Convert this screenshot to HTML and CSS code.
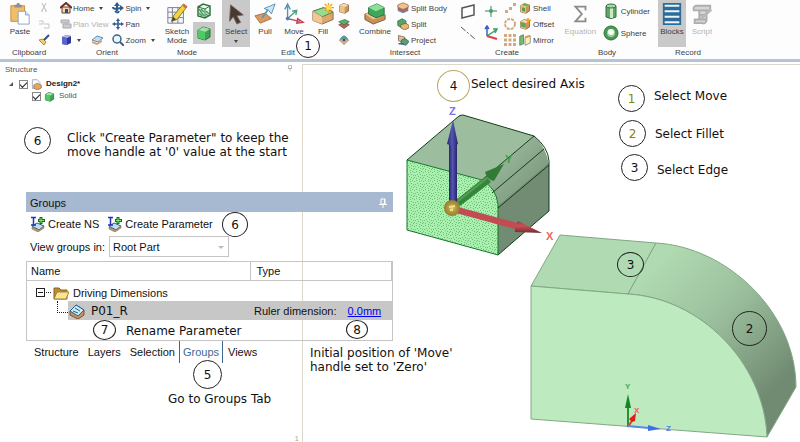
FILE: index.html
```html
<!DOCTYPE html>
<html lang="en">
<head>
<meta charset="utf-8">
<title>Design2 - Create Parameter</title>
<link rel="stylesheet" href="styles.css">
</head>
<body>
<svg class="defs" width="0" height="0" aria-hidden="true">
  <symbol id="cube" viewBox="0 0 16 16"><path d="M2 5l5-3 7 2v8l-5 3-7-2z" fill="#3fa052" stroke="#23713a"/><path d="M2 5l7 2 5-3-7-2z" fill="#9fe0a5"/><path d="M2 5l7 2v8l-7-2z" fill="#4fc868"/></symbol>
  <symbol id="tan" viewBox="0 0 16 16"><path d="M2 5l5-3 7 2v8l-5 3-7-2z" fill="#c99558" stroke="#7d5a35"/><path d="M2 5l7 2 5-3-7-2z" fill="#f4d7ad"/><path d="M2 5l7 2v8l-7-2z" fill="#eec28c"/></symbol>
  <symbol id="group-add" viewBox="0 0 16 16"><path d="M2 10l5-3 7 3-5 4z" fill="#b9e1f3" stroke="#39607d"/><path d="M2 11v2l6 3 6-4v-2l-5 4z" fill="#bb9a76" stroke="#755a43" stroke-width=".5"/><path d="M1 1.500h5M3.500 2v7M1 9h5" stroke="#2330b8" stroke-width="1.500"/><path d="M11 1v7M8 4.500h7" stroke="#176a1b" stroke-width="3"/><path d="M11 2v5M9 4.500h5" stroke="#7bed6b" stroke-width="1"/></symbol>
</svg>

<header class="ribbon">
  <section class="group clipboard">
    <div class="tools">
      <button class="big"><svg viewBox="0 0 24 24"><path d="M2 3h15v17H2z" fill="#f0bd68" stroke="#c48b3b"/><path d="M6 5V2h2l1-2h2l1 2h2v3z" fill="#8f8f94"/><path d="M10 9h8l4 4v10H10z" fill="#fff" stroke="#8aa0bd"/><path d="M18 9v4h4" fill="#dce8f4" stroke="#8aa0bd"/></svg>Paste</button>
      <div class="stack">
        <button aria-label="Cut"><svg viewBox="0 0 12 12"><path d="M4 1l4 8M8 1L4 9M3 9h2M7 9h2" stroke="#bbb" fill="none"/></svg></button>
        <button aria-label="Copy"><svg viewBox="0 0 12 12"><path d="M1 3h4v3H1M6 6h5v4H6" stroke="#c5c5c5" fill="none"/></svg></button>
        <button aria-label="Format painter"><svg viewBox="0 0 12 12"><path d="M1 6l4-1 3 3-2 3z" fill="#efd46e" stroke="#b58b32"/><path d="M6 6l5-5" stroke="#344c82" stroke-width="2"/></svg></button>
      </div>
    </div>
    <h2>Clipboard</h2>
  </section>

  <section class="group orient">
    <div class="tools">
      <div class="stack">
        <button><svg viewBox="0 0 12 12"><path d="M2 5h8v6H2z" fill="#f2d7a5" stroke="#6b3d30"/><path d="M0 6l6-5 6 5" fill="none" stroke="#702a2a" stroke-width="2"/><path d="M5 7h3v4H5z" fill="#38458c"/></svg>Home <i class="caret"></i></button>
        <button class="off"><svg viewBox="0 0 12 12"><path d="M1 2h8v3H1zM3 6h8v4H3z" fill="#ccc" stroke="#aaa"/></svg>Plan View</button>
        <div class="pair">
          <button><svg viewBox="0 0 12 12"><path d="M2 3l4-2 5 1v7l-4 2-5-1z" fill="#313896"/><path d="M2 3l5 1 4-2-5-1z" fill="#b4bbee"/><path d="M2 3l5 1v7l-5-1z" fill="#5a66cf"/></svg><i class="caret"></i></button>
          <button aria-label="View"><svg viewBox="0 0 12 12"><path d="M1 6l5-4 6 2-5 4z" fill="#bfe0f2" stroke="#6a8baa"/><path d="M1 7v2l5 2 5-3V6L6 9z" fill="#d3a171"/></svg></button>
        </div>
      </div>
      <div class="stack">
        <button><svg viewBox="0 0 12 12"><path d="M5 1v8" stroke="#315d8b" stroke-width="2"/><path d="M2 4l3-4 3 4zM8 3l4 3-4 3z" fill="#315d8b"/><path d="M1 5q0 3 8 1M3 9q3 3 4 0" fill="none" stroke="#315d8b" stroke-width="2"/></svg>Spin <i class="caret"></i></button>
        <button><svg viewBox="0 0 12 12"><path d="M6 2v8M2 6h8" stroke="#315d8b" stroke-width="1.500"/><path d="M4 3l2-3 2 3zM4 9l2 3 2-3zM3 4L0 6l3 2zM9 4l3 2-3 2z" fill="#315d8b"/></svg>Pan</button>
        <button><svg viewBox="0 0 12 12"><circle cx="5" cy="5" r="4" fill="#eaf6fb" stroke="#376490" stroke-width="1.500"/><path d="M8 8l4 4" stroke="#376490" stroke-width="2"/></svg>Zoom <i class="caret"></i></button>
      </div>
    </div>
    <h2>Orient</h2>
  </section>

  <section class="group mode">
    <div class="tools">
      <button class="big"><svg viewBox="0 0 24 24"><path d="M2 5h17v17H2zM2 10h17M2 16h17M7 5v17M13 5v17" fill="#f7f7fb" stroke="#77778b"/><path d="M6 20l2-6L19 1l4 3-11 14z" fill="#f1d33e" stroke="#82702a"/><path d="M18 3l2-2 3 3-2 2z" fill="#d6655e"/><path d="M6 20l2-5 3 3z" fill="#444"/></svg>Sketch<br>Mode</button>
      <div class="views">
        <button aria-label="Section mode"><svg viewBox="0 0 16 16"><path d="M2 4l5-3 7 2v9l-5 3-7-2z" fill="#e9f6e8" stroke="#2b7440" stroke-width="1.500"/><path d="M2 4l7 2 5-3M9 6v9" fill="none" stroke="#2b7440"/><path d="M3 6l5 7M3 10l3 3M5 6l3 3M10 8l3 3M10 11l2 2" stroke="#4c9a60" stroke-width="1.500"/></svg></button>
        <button class="active" aria-label="3D mode"><svg viewBox="0 0 16 16"><use href="#cube"/></svg></button>
      </div>
    </div>
    <h2>Mode</h2>
  </section>

  <section class="group edit">
    <div class="tools">
      <button class="big active"><svg viewBox="0 0 24 24"><path d="M6 2l14 11-7 1 4 7-4 2-4-8-4 5z" fill="#493832" stroke="#78665e"/></svg>Select<i class="caret"></i></button>
      <button class="big"><svg viewBox="0 0 24 24"><path d="M1 14l11-3 7 6-12 5z" fill="#d99a62" stroke="#a16e45"/><path d="M9 16l8-11" stroke="#5298bd" stroke-width="2"/><path d="M11 6L23 1l-4 11-3-4z" fill="#c6e7f5" stroke="#5790b4"/></svg>Pull</button>
      <button class="big"><svg viewBox="0 0 24 24"><path d="M5 17V3M2 7l3-6 3 6" fill="none" stroke="#5a93b4" stroke-width="1.500"/><path d="M5 17l9-8M10 9l5-1-1 5" fill="none" stroke="#4aa080" stroke-width="1.500"/><path d="M5 17l13 3M16 17l6 4-7 1z" fill="#f3b9bd" stroke="#bc4653" stroke-width="1.500"/><circle cx="5" cy="17" r="2" fill="#5576bd"/></svg>Move</button>
      <button class="big"><svg viewBox="0 0 24 24"><path d="M1 9l12-4 10 5v8l-12 5-10-4z" fill="#dda76c" stroke="#886345"/><path d="M1 9l12-4 10 5-12 5z" fill="#98db91" stroke="#44864c"/><path d="M1 9l10 6v8l-10-4z" fill="#f2c593"/><path d="M18 0v11M13 5h11M14 1l8 8M22 1l-8 8" stroke="#f49b20" stroke-width="1.500"/><circle cx="18" cy="5" r="3" fill="#ffdc4b"/></svg>Fill</button>
      <div class="stack">
        <button aria-label="Replace"><svg viewBox="0 0 16 16"><use href="#tan"/></svg></button>
        <button aria-label="Tweak"><svg viewBox="0 0 16 16"><path d="M1 9l8-4 6 4-7 5z" fill="#bd645a" stroke="#834a45"/><path d="M1 5l8-3 6 3-7 4z" fill="#58b269" stroke="#32794a"/></svg></button>
        <button aria-label="Pattern"><svg viewBox="0 0 16 16"><path d="M2 8l6-3 6 3-6 6z" fill="#e3bd8f" stroke="#876442"/><path d="M3 7q5-9 10 0" fill="#64a49c" stroke="#376e75"/><circle cx="8" cy="8" r="2" fill="#354fa0"/></svg></button>
      </div>
    </div>
    <h2>Edit</h2>
  </section>

  <section class="group intersect">
    <div class="tools">
      <button class="big"><svg viewBox="0 0 24 24"><path d="M1 12l13-4 9 5v5l-13 5-9-5z" fill="#c89159" stroke="#78583c"/><path d="M1 12l13-4 9 5-13 5z" fill="#eec591"/><path d="M5 5l9-4 8 4v8l-9 3-8-4z" fill="#3fa75d" stroke="#236f3a"/><path d="M5 5l9-4 8 4-9 4z" fill="#8ce199"/></svg>Combine</button>
      <div class="stack">
        <button><svg viewBox="0 0 16 16"><path d="M1 9v3l7 3 7-3V9z" fill="#628dc4"/><path d="M1 6v4l7 3 7-3V6z" fill="#c05d50"/><path d="M1 4l7-3 7 3v3l-7 3-7-3z" fill="#ecc291" stroke="#956b49"/></svg>Split Body</button>
        <button><svg viewBox="0 0 16 16"><path d="M1 4l6-3 5 3v7l-6 2-5-3z" fill="#53a568" stroke="#32704a"/><path d="M5 9l7-2 4 3v3l-6 3-5-3z" fill="#e9b773" stroke="#78583c"/></svg>Split</button>
        <button><svg viewBox="0 0 16 16"><path d="M2 2l8 2v8L2 9z" fill="#e3c094" stroke="#7b624c"/><path d="M6 8l5-2 5 4-4 5-7-2z" fill="#55a26b" stroke="#2f5971"/><path d="M2 13h7" stroke="#4064a7" stroke-width="2"/></svg>Project</button>
      </div>
    </div>
    <h2>Intersect</h2>
  </section>

  <section class="group create">
    <div class="tools">
      <div class="views">
        <button aria-label="Plane"><svg viewBox="0 0 16 16"><path d="M2 5l12-3v10L2 15z" fill="#fff" stroke="#555" stroke-width="1.500"/></svg></button>
        <button aria-label="Axis"><svg viewBox="0 0 16 16"><path d="M1 2l14 12" stroke="#555" stroke-dasharray="6 2 2 2"/></svg></button>
      </div>
      <div class="views">
        <button aria-label="Point"><svg viewBox="0 0 16 16"><path d="M8 3v11M2 8h12" stroke="#3d8058"/><circle cx="8" cy="8" r="2" fill="#38a45f"/></svg></button>
        <button aria-label="Origin"><svg viewBox="0 0 16 16"><path d="M4 11V2M2 4l2-3 2 3" fill="none" stroke="#3b5fc9" stroke-width="1.500"/><path d="M4 11l9-6M10 4l4 0-2 4" fill="none" stroke="#31a263" stroke-width="1.500"/><path d="M4 11l10 3" stroke="#df3d44" stroke-width="2"/></svg></button>
      </div>
      <div class="stack">
        <button aria-label="Linear pattern"><svg viewBox="0 0 12 12"><path d="M1 8h3v3H1zM5 5h3v3H5zM9 1h3v3H9z" fill="#d1aa80"/></svg></button>
        <button aria-label="Circular pattern"><svg viewBox="0 0 12 12"><circle cx="6" cy="6" r="5" fill="none" stroke="#d1aa80" stroke-width="2" stroke-dasharray="3 1"/></svg></button>
        <button aria-label="Fill pattern"><svg viewBox="0 0 12 12"><path d="M0 0h3v3H0zM4.500 0h3v3h-3zM9 0h3v3H9zM0 4.500h3v3H0zM4.500 4.500h3v3h-3zM9 4.500h3v3H9zM0 9h3v3H0zM4.500 9h3v3h-3zM9 9h3v3H9z" fill="#d1aa80"/></svg></button>
      </div>
      <div class="stack">
        <button><svg viewBox="0 0 16 16"><use href="#tan"/><path d="M3 4l7 2 4-2-6-2z" fill="#6ab33d"/><path d="M4 7l4 1v5l-4-1z" fill="#5c9e42"/></svg>Shell</button>
        <button><svg viewBox="0 0 16 16"><use href="#tan"/><path d="M2 5l7 2v6l-6-1z" fill="#64a35b"/><path d="M12 0v7M9 3h7" stroke="#f49b20" stroke-width="2"/></svg>Offset</button>
        <button><svg viewBox="0 0 16 16"><path d="M1 3l5-2v12l-5 2z" fill="#7bbb77" stroke="#467c4c"/><path d="M8 5l7-2v9l-7 3z" fill="#fff0b9" stroke="#777"/><path d="M8 4l7-2" stroke="#f19a22" stroke-width="2"/></svg>Mirror</button>
      </div>
    </div>
    <h2>Create</h2>
  </section>

  <section class="group body">
    <div class="tools">
      <button class="big off"><svg viewBox="0 0 24 24"><path d="M18 8V4H7l7 8-7 8h11v-4" fill="none" stroke="#8b8b8b" stroke-width="2"/></svg>Equation</button>
      <div class="views">
        <button><svg viewBox="0 0 16 16"><path d="M3 3v11q5 3 10 0V3z" fill="#5ea765" stroke="#356f40"/><path d="M7 5h3v10H7z" fill="#cceacb"/><ellipse cx="8" cy="3" rx="5" ry="2" fill="#a6d8a9" stroke="#356f40"/></svg>Cylinder</button>
        <button><svg viewBox="0 0 16 16"><circle cx="8" cy="8" r="7" fill="#4b9954" stroke="#327040"/><circle cx="8" cy="8" r="4" fill="#9bcf9a"/><circle cx="8" cy="7" r="3" fill="#f4fff1"/></svg>Sphere</button>
      </div>
    </div>
    <h2>Body</h2>
  </section>

  <section class="group record">
    <div class="tools">
      <button class="big active"><svg viewBox="0 0 24 24"><path d="M2 0h20v24H2z" fill="#2d6c98"/><path d="M4 3h16M4 9h16M4 15h16M4 21h16" stroke="#edf5fa" stroke-width="2"/></svg>Blocks</button>
      <button class="big off"><svg viewBox="0 0 24 24"><path d="M5 3h16v5h-4v11q-1 4-5 3H4v-4h5V8H3q-1-4 2-5zM9 8h8M10 13h6M9 18h8" fill="#d5d5d5" stroke="#adadad" stroke-width="2"/><path d="M11 17L22 7" stroke="#b8b8b8" stroke-width="3"/></svg>Script</button>
    </div>
    <h2>Record</h2>
  </section>
</header>

<main class="workspace">
  <aside class="structure">
    <div class="structure-head">Structure
      <svg viewBox="0 0 8 10"><path d="M2 1h4v4H2zM1 5h6M4 5v4" fill="none" stroke="#aaa"/></svg>
    </div>
    <div class="tree">
      <label class="node"><i class="twisty"></i><input type="checkbox" checked><svg viewBox="0 0 16 16"><path d="M2 1h7l4 4v9H2z" fill="#f9f9fc" stroke="#8b91aa"/><path d="M4 9l5-3 6 3v4l-6 3-5-3z" fill="#e1a76a" stroke="#926541"/></svg><b>Design2*</b></label>
      <label class="node child"><input type="checkbox" checked><svg viewBox="0 0 16 16"><use href="#cube"/></svg><span>Solid</span></label>
    </div>
    <span class="ruler">1</span>
  </aside>
  <div class="canvas"></div>
</main>

<svg class="model small-model" viewBox="400 105 160 155" role="img" aria-label="Block with move handle">
  <defs>
    <pattern id="stipple" width="9" height="9" patternUnits="userSpaceOnUse"><path fill="#7bb781" shape-rendering="crispEdges" d="M0 1h1v1h-1zM2 0h1v1h-1zM5 1h1v1h-1zM7 0h1v1h-1zM3 3h1v1h-1zM1 4h1v1h-1zM6 3h1v1h-1zM8 4h1v1h-1zM4 5h1v1h-1zM0 6h1v1h-1zM2 7h1v1h-1zM6 6h1v1h-1zM8 7h1v1h-1zM5 8h1v1h-1z"/></pattern>
    <linearGradient id="bend" x1="0" y1="0" x2="1" y2="1"><stop offset=".4" stop-color="#91af92"/><stop offset="1" stop-color="#718a73"/></linearGradient>
    <linearGradient id="zbar"><stop stop-color="#252870"/><stop offset=".45" stop-color="#5555b4"/><stop offset="1" stop-color="#242466"/></linearGradient>
    <linearGradient id="xbar" x2="0" y2="1"><stop stop-color="#963e42"/><stop offset=".4" stop-color="#cc5055"/><stop offset="1" stop-color="#702d31"/></linearGradient>
    <radialGradient id="ball"><stop stop-color="#e3d17b"/><stop offset=".4" stop-color="#b9a044"/><stop offset="1" stop-color="#927e2e"/></radialGradient>
  </defs>
  <path d="M407 160L459 116q2-1 4-1l71 21-52 44z" fill="#9cbe9e"/>
  <path d="M482 180l52-44q12 10 15 29l-51 43q-3-19-16-28z" fill="url(#bend)"/>
  <path d="M498 206l51-43v48l-51 44z" fill="#718c73"/>
  <path d="M407 160l75 20q14 8 16 24v51l-91-25z" fill="#a6f2ad"/>
  <path d="M407 160l75 20q14 8 16 24v51l-91-25z" fill="url(#stipple)" stroke="#13772b"/>
  <path d="M407 160L459 116q2-1 4-1l71 21q14 11 15 25v50l-51 44M482 180l52-44M492 193l52-44M498 208l51-43" fill="none" stroke="#153c1a"/>
  <path d="M456 200l30-24 5 6-31 24z" fill="#34863a"/><path d="M458 201l29-23" stroke="#55a152" stroke-width="2"/>
  <path d="M485 172l19-8-10 17q-7-1-9-9z" fill="#307c37"/>
  <path d="M449 208v-65h8v65z" fill="url(#zbar)"/><path d="M447 144l6-24 5 24q-5 3-11 0z" fill="url(#zbar)"/>
  <path d="M458 207l59 16-2 6-59-16z" fill="#c24c51"/><path d="M518 221l24 12-27-1q-1-7 3-11z" fill="url(#xbar)"/>
  <circle cx="452" cy="208" r="8" fill="url(#ball)"/><path d="M449 207l6-1M450 210l3 0" fill="none" stroke="#f1df8b" stroke-width="2"/>
</svg>

<svg class="model large-model" viewBox="525 230 275 212" role="img" aria-label="Filleted block">
  <defs><linearGradient id="fillet" gradientUnits="userSpaceOnUse" x1="650" y1="270" x2="777" y2="397"><stop stop-color="#b0dab1"/><stop offset=".45" stop-color="#9bbf9d"/><stop offset=".95" stop-color="#718b72"/></linearGradient></defs>
  <g stroke="#80a883" stroke-linejoin="round">
    <path d="M531 286l29-51 96 8-28 51z" fill="#b0dab2"/>
    <path d="M628 294l28-51C728 247 796 313 796 387l-29 50C764 362 700 298 628 294z" fill="url(#fillet)"/>
    <path d="M531 286l97 8C700 298 764 362 767 437L531 419z" fill="#bdeabf"/>
  </g>
  <path d="M628 427v-20" stroke="#249331" stroke-width="2"/><path d="M625 408l3-14 3 14z" fill="#128a21"/>
  <path d="M628 427l5-8" stroke="#d9423c" stroke-width="2"/><path d="M629 419l7-6-1 8-3 1z" fill="#e51d19"/>
  <path d="M628 426l21 2" stroke="#5d8cde" stroke-width="2"/><path d="M648 425l13 4-13 2z" fill="#3d70ea"/>
</svg>

<section class="groups-panel">
  <header class="panel-head">Groups
    <svg viewBox="0 0 8 10"><path d="M2 1h4v5H2zM0 6.500h8M4 7v3" fill="none" stroke="#fff"/><path d="M5 1h1v5H5z" fill="#fff"/></svg>
  </header>
  <div class="panel-tools">
    <button><svg viewBox="0 0 16 16"><use href="#group-add"/></svg>Create NS</button>
    <button><svg viewBox="0 0 16 16"><use href="#group-add"/></svg>Create Parameter</button>
  </div>
  <div class="filter">
    <label for="scope">View groups in:</label>
    <span class="picker"><select id="scope"><option>Root Part</option></select></span>
  </div>
  <div class="table-frame">
    <table>
      <colgroup><col class="name-col"><col></colgroup>
      <thead><tr><th>Name</th><th>Type</th></tr></thead>
      <tbody>
        <tr class="folder"><td colspan="2"><div class="folder-row"><span class="collapse"></span><svg viewBox="0 0 16 16"><path d="M1 3h5l2 2h6v9H1z" fill="#b98b32" stroke="#8a651b"/><path d="M4 7h12l-3 7H1z" fill="#fae497" stroke="#ac8131"/></svg>Driving Dimensions</div></td></tr>
        <tr class="param"><td><div class="branch"><span class="param-name"><svg viewBox="0 0 16 16"><path d="M1 8l6-6 8 5v5l-6 4-8-4z" fill="#c89360" stroke="#725138"/><path d="M1 8l6-6 8 5-6 6z" fill="#c9ebf8" stroke="#26628c"/><path d="M4 8l5 2M6 5l5 3" stroke="#26628c"/></svg>P01_R</span></div></td><td class="value">Ruler dimension: <a href="#">0.0mm</a></td></tr>
      </tbody>
    </table>
  </div>
  <nav class="tabs">
    <button>Structure</button><button>Layers</button><button>Selection</button><button class="current">Groups</button><button>Views</button>
  </nav>
</section>

<div class="notes">
  <span class="badge b-move">1</span>
  <span class="badge b-click">6</span>
  <p class="n-click">Click "Create Parameter" to keep the<br>move handle at '0' value at the start</p>
  <span class="badge b-create">6</span>
  <span class="badge b-rename">7</span><p class="n-rename">Rename Parameter</p>
  <span class="badge b-zero">8</span><p class="n-zero">Initial position of 'Move'<br>handle set to 'Zero'</p>
  <span class="badge b-tab">5</span><p class="n-tab">Go to Groups Tab</p>
  <span class="badge b-axis">4</span><p class="n-axis">Select desired Axis</p>
  <span class="badge olive b-one">1</span><p class="n-one">Select Move</p>
  <span class="badge olive b-two">2</span><p class="n-two">Select Fillet</p>
  <span class="badge b-three">3</span><p class="n-three">Select Edge</p>
  <span class="badge b-edge">3</span>
  <span class="badge b-fillet">2</span>
  <span class="axis z">Z</span><span class="axis y">Y</span><span class="axis x">X</span>
  <span class="axis tiny y2">Y</span><span class="axis tiny x2">X</span><span class="axis tiny z2">Z</span>
</div>
</body>
</html>
```
FILE: styles.css
```css
* { box-sizing: border-box; }

body {
  margin: 0;
  position: relative;
  display: flex;
  flex-direction: column;
  height: 100vh;
  overflow: hidden;
  background: #fff;
  color: #111;
  font: 11px/14px "Liberation Sans", sans-serif;
}

.defs { position: absolute; }

button {
  margin: 0;
  padding: 0;
  border: 0;
  background: none;
  color: inherit;
  font: inherit;
}

/* Ribbon */
.ribbon {
  display: flex;
  border-bottom: 3px solid #b4c5da;
  background: #fdfdfd;
  color: #3d3d46;
  font-size: 8px;
  line-height: 9px;
}

.group { display: flex; flex-direction: column; }
.group h2 {
  margin: 0;
  font-size: 8px;
  font-weight: 400;
  line-height: 12px;
  text-align: center;
}
.tools { display: flex; height: 47px; }
.clipboard { width: 58px; }
.clipboard .tools { padding-left: 6px; gap: 4px; }
.orient { width: 98px; }
.orient .tools { padding-left: 2px; gap: 4px; }
.mode { width: 62px; }
.mode .tools { padding-left: 7px; gap: 2px; }
.edit { width: 140px; }
.edit .tools { padding-left: 4px; gap: 1px; }
.intersect { width: 94px; }
.intersect .tools { padding-left: 1px; gap: 6px; }
.create { width: 110px; }
.create .tools { padding-left: 6px; gap: 3px; }
.body { width: 90px; }
.body .tools { padding-left: 4px; gap: 6px; }
.record { width: 72px; }
.record .tools { padding-left: 6px; gap: 2px; }

.big {
  display: flex;
  flex-direction: column;
  align-items: center;
  min-width: 28px;
  padding-top: 2px;
}
.big svg { width: 22px; height: 24px; margin-bottom: 1px; }
.active { background: #c9c9c9; }
.off { color: #b4b4b4; }

.stack { display: grid; grid-template-rows: repeat(3, 16px); align-items: center; justify-items: start; }
.stack button, .views button { display: flex; align-items: center; gap: 2px; white-space: nowrap; }
.stack svg { width: 12px; height: 12px; }
.orient .stack button { gap: 1px; }
.pair { display: flex; gap: 6px; }
.views { display: grid; grid-template-rows: 22px 22px; }
.views button { padding: 2px; }
.views svg { width: 16px; height: 16px; }
.mode .views button { padding: 3px; }

.caret {
  display: inline-block;
  margin: 0 4px;
  border: 2px solid transparent;
  border-top: 3px solid #444;
  border-bottom: 0;
}
.big .caret { margin-top: 4px; }

/* Workspace */
.workspace { flex: 1; display: grid; grid-template-columns: 302px 1fr; padding-top: 2px; }
.canvas { border: solid #ddd8ca; border-width: 1px 0 0 1px; }
.structure { display: flex; flex-direction: column; color: #555; font-size: 8px; line-height: 12px; }
.structure-head { display: flex; justify-content: space-between; padding: 0 9px 0 5px; }
.structure-head svg { width: 6px; height: 9px; }
.tree { padding: 2px 0 0 9px; }
.node { display: flex; align-items: center; height: 12px; gap: 3px; }
.node.child { padding-left: 23px; }
.node svg { width: 11px; height: 11px; }
.node b { color: #222; }
.node b, .node span { padding-left: 1px; }
.twisty { border: solid transparent; border-right-color: #555; border-bottom-color: #555; border-width: 2px; margin-right: 3px; }
.node input {
  appearance: none;
  width: 9px;
  height: 9px;
  margin: 0;
  border: 1px solid #888;
  background: #fff;
  display: grid;
  place-items: center;
}
.node input:checked::before {
  content: "";
  width: 6px;
  height: 3px;
  border: solid #222;
  border-width: 0 0 1px 1px;
  transform: rotate(-45deg);
}
.ruler { margin-top: auto; padding-right: 3px; text-align: right; color: #aaa; line-height: 6px; }

/* Models placed on the design canvas */
.model { position: absolute; }
.small-model { left: 400px; top: 105px; width: 160px; height: 155px; }
.large-model { left: 525px; top: 230px; width: 275px; height: 212px; }

/* Floating groups panel */
.groups-panel { position: absolute; left: 26px; top: 192px; width: 367px; }
.panel-head {
  display: flex;
  align-items: center;
  justify-content: space-between;
  height: 20px;
  padding: 2px 6px 0 4px;
  background: #a7b9d0;
}
.panel-head svg { width: 8px; height: 10px; }
.panel-tools { display: flex; gap: 8px; height: 24px; padding-left: 4px; }
.panel-tools button { display: flex; align-items: center; gap: 2px; }
.panel-tools svg { width: 16px; height: 16px; }
.filter { display: flex; align-items: center; gap: 4px; height: 21px; padding-left: 4px; }
.picker { position: relative; }
.picker::after {
  content: "";
  position: absolute;
  right: 5px;
  top: 10px;
  border: 3px solid transparent;
  border-top-color: #bbb;
  border-bottom: 0;
}
.picker select {
  appearance: none;
  display: block;
  width: 120px;
  height: 21px;
  padding: 0 3px;
  border: 1px solid #c5c5c5;
  border-radius: 0;
  background: #fff;
  color: inherit;
  font: inherit;
}
.table-frame { min-height: 80px; margin-top: 4px; border: 1px solid #c5c5c5; }
table { width: 100%; border-collapse: collapse; table-layout: fixed; }
.name-col { width: 223px; }
th {
  height: 18px;
  padding: 1px 4px 0;
  border-bottom: 1px solid #c5c5c5;
  font-weight: 400;
  text-align: left;
}
th + th { padding-left: 6px; border-left: 1px solid #c5c5c5; border-right: 1px solid #c5c5c5; }
td { padding: 0; }
.folder td { height: 21px; padding-top: 4px; }
.folder-row { display: flex; align-items: center; padding-left: 9px; gap: 4px; }
.folder-row svg { width: 16px; height: 16px; }
.collapse { position: relative; width: 9px; height: 9px; border: 1px solid #222; margin-right: 4px; }
.collapse::before { content: ""; display: block; width: 5px; margin: 3px 1px; border-top: 1px solid #222; }
.collapse::after { content: ""; position: absolute; left: 9px; top: 3px; width: 5px; border-top: 1px dotted #222; }
.param td { height: 19px; }
.branch { display: flex; padding-left: 30px; }
.branch::before { content: ""; width: 10px; height: 11px; border: dotted #222; border-width: 0 0 1px 1px; }
.param-name {
  flex: 1;
  display: flex;
  align-items: center;
  gap: 6px;
  height: 19px;
  padding-left: 1px;
  background: #c7c7c7;
  font: 12px/14px "DejaVu Sans", sans-serif;
}
.param-name svg { width: 16px; height: 16px; }
.value { padding-left: 4px; background: #c7c7c7; }
.value a { margin-left: 8px; color: #0000f5; }
.tabs { display: flex; height: 22px; padding-left: 4px; }
.tabs button { padding: 0 4px; }
.tabs button + button { padding-left: 5px; }
.tabs button.current { padding: 0 3px; border: solid #3c6994; border-width: 0 1px; color: #3c6994; }

/* Callouts over the drawing */
.notes { font: 12px/14px "DejaVu Sans", sans-serif; }
.notes p { position: absolute; margin: 0; white-space: nowrap; }
.badge {
  position: absolute;
  display: grid;
  place-items: center;
  width: 27px;
  height: 27px;
  border: 1px solid #222;
  border-radius: 50%;
}
.olive { color: #858500; }
.b-move { left: 296px; top: 34px; width: 24px; height: 24px; background: #fff; }
.b-click { left: 24px; top: 127px; }
.n-click { left: 67px; top: 131px; }
.b-create { left: 222px; top: 212px; width: 26px; height: 25px; }
.b-rename { left: 93px; top: 320px; width: 23px; height: 20px; }
.n-rename { left: 126px; top: 324px; }
.b-zero { left: 346px; top: 320px; width: 22px; height: 19px; }
.n-zero { left: 310px; top: 346px; }
.b-tab { left: 193px; top: 360px; width: 29px; height: 29px; }
.n-tab { left: 168px; top: 392px; }
.b-axis { left: 437px; top: 70px; width: 33px; height: 32px; border-color: #b7a85b; }
.n-axis { left: 471px; top: 77px; }
.b-one { left: 618px; top: 85px; }
.n-one { left: 654px; top: 89px; }
.b-two { left: 619px; top: 120px; }
.n-two { left: 655px; top: 127px; }
.b-three { left: 621px; top: 154px; }
.n-three { left: 657px; top: 163px; }
.b-edge { left: 617px; top: 252px; width: 27px; height: 25px; }
.b-fillet { left: 732px; top: 311px; width: 35px; height: 35px; }
.axis { position: absolute; font: bold 11px/12px "Liberation Sans", sans-serif; }
.axis.tiny { font-size: 8px; }
.z { left: 449px; top: 105px; color: #7373f4; }
.y { left: 505px; top: 153px; color: #3f9b49; }
.x { left: 546px; top: 230px; color: #f06464; }
.y2 { left: 625px; top: 381px; color: #5aa45d; }
.x2 { left: 634px; top: 405px; color: #e7605b; }
.z2 { left: 666px; top: 423px; color: #5b78e4; }
```
